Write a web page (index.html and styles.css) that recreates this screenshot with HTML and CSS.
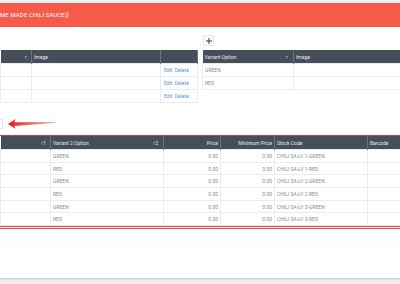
FILE: index.html
```html
<!DOCTYPE html>
<html lang="en">
<head>
    <meta charset="UTF-8">
    <meta name="viewport" content="width=device-width, initial-scale=1.0">
    <link rel="stylesheet" href="styles.css">
</head>
<body>
    <div class="card">
        <div class="card-head">ME MADE CHILI SAUCE)]</div>

        <div class="panels">
            <div class="panel panel-left">
                <div class="toolbar"></div>
                <table class="grid grid-left">
                    <colgroup>
                        <col style="width: 31px">
                        <col style="width: 129px">
                        <col style="width: 37px">
                    </colgroup>
                    <thead>
                        <tr>
                            <th class="sort">&uarr;</th>
                            <th>Image</th>
                            <th></th>
                        </tr>
                    </thead>
                    <tbody>
                        <tr><td></td><td></td><td class="actions"><a>Edit</a> <a>Delete</a></td></tr>
                        <tr><td></td><td></td><td class="actions"><a>Edit</a> <a>Delete</a></td></tr>
                        <tr><td></td><td></td><td class="actions"><a>Edit</a> <a>Delete</a></td></tr>
                    </tbody>
                </table>
            </div>

            <div class="panel panel-right">
                <div class="toolbar">
                    <span class="add-btn">
                        <svg width="6" height="6" viewBox="0 0 6 6"><path d="M3 0V6M0 3H6" stroke="#3d3d3d" stroke-width="1"/></svg>
                    </span>
                </div>
                <table class="grid grid-right">
                    <colgroup>
                        <col style="width: 91px">
                        <col style="width: 120px">
                    </colgroup>
                    <thead>
                        <tr>
                            <th>Variant Option <span class="arrow">&uarr;</span></th>
                            <th>Image</th>
                        </tr>
                    </thead>
                    <tbody>
                        <tr><td>GREEN</td><td></td></tr>
                        <tr><td>RED</td><td></td></tr>
                    </tbody>
                </table>
            </div>
        </div>

        <div class="pointer-row">
            <span class="edge-box"></span>
            <svg class="pointer" width="50" height="14" viewBox="0 0 50 14">
                <defs>
                    <linearGradient id="tail" x1="0" x2="1" y1="0" y2="0">
                        <stop offset="0" stop-color="#e01f1a"/>
                        <stop offset="1" stop-color="#f15a4f" stop-opacity="0.5"/>
                    </linearGradient>
                </defs>
                <polygon points="0,7 7.5,2 6.5,5.2 48,5 48,5.8 6.5,8.9 7.5,12" fill="url(#tail)"/>
            </svg>
        </div>

        <div class="variants">
            <table class="grid grid-variants">
                <colgroup>
                    <col style="width: 50px">
                    <col style="width: 113px">
                    <col style="width: 57px">
                    <col style="width: 54px">
                    <col style="width: 93px">
                    <col style="width: 60px">
                </colgroup>
                <thead>
                    <tr>
                        <th class="sort">&uarr;1</th>
                        <th>Variant 2 Option <span class="arrow">&uarr;2</span></th>
                        <th class="num">Price</th>
                        <th class="num">Minimum Price</th>
                        <th>Stock Code</th>
                        <th>Barcode</th>
                    </tr>
                </thead>
                <tbody>
                    <tr><td></td><td>GREEN</td><td class="num">0.00</td><td class="num">0.00</td><td>CHILI SA-LV 1-GREEN</td><td></td></tr>
                    <tr><td></td><td>RED</td><td class="num">0.00</td><td class="num">0.00</td><td>CHILI SA-LV 1-RED</td><td></td></tr>
                    <tr><td></td><td>GREEN</td><td class="num">0.00</td><td class="num">0.00</td><td>CHILI SA-LV 2-GREEN</td><td></td></tr>
                    <tr><td></td><td>RED</td><td class="num">0.00</td><td class="num">0.00</td><td>CHILI SA-LV 2-RED</td><td></td></tr>
                    <tr><td></td><td>GREEN</td><td class="num">0.00</td><td class="num">0.00</td><td>CHILI SA-LV 3-GREEN</td><td></td></tr>
                    <tr><td></td><td>RED</td><td class="num">0.00</td><td class="num">0.00</td><td>CHILI SA-LV 3-RED</td><td></td></tr>
                </tbody>
            </table>
        </div>

        <div class="card-foot"></div>
    </div>
</body>
</html>
```

FILE: styles.css
```css
html, body {
    margin: 0;
    padding: 0;
    overflow: hidden;
}

body {
    background-color: #eceef0;
    font-family: Roboto, "Liberation Sans", Arial, sans-serif;
    width: 400px;
    height: 284px;
}

.card {
    background-color: #fff;
    margin-top: 3px;
    height: 275px;
    box-shadow: 0 1px 2px rgba(0, 0, 0, 0.18);
    overflow: hidden;
}

.card-head {
    background-color: #f65b4a;
    color: #fff;
    height: 24px;
    line-height: 24px;
    font-size: 6px;
    letter-spacing: 0.1px;
    white-space: nowrap;
}

.panels {
    display: flex;
    gap: 5px;
    padding-top: 8px;
    width: 420px;
}

.panel-left {
    width: 197px;
    flex: none;
}

.panel-right {
    width: 211px;
    flex: none;
}

.toolbar {
    display: flex;
    height: 11px;
    margin-bottom: 4px;
}

.add-btn {
    display: flex;
    align-items: center;
    justify-content: center;
    width: 9px;
    height: 9px;
    margin-left: 1px;
    border: 1px solid #e6e6e6;
    border-radius: 1px;
    background: #fff;
}

table.grid {
    border-collapse: collapse;
    table-layout: fixed;
    font-size: 5px;
}

.grid-left {
    width: 197px;
}

.grid-right {
    width: 211px;
}

.grid th {
    background-color: #464e5b;
    color: #e6e8ec;
    font-weight: normal;
    text-align: left;
    height: 13px;
    padding: 0 2px;
    border-right: 1px solid #6a7280;
    white-space: nowrap;
}

.grid th.sort {
    text-align: right;
    padding-right: 4px;
}

.grid th.num,
.grid td.num {
    text-align: right;
}

.arrow {
    float: right;
    margin-right: 3px;
}

.grid td {
    height: 12px;
    padding: 0 2px;
    color: #8a8d91;
    border: 1px solid #ececec;
    white-space: nowrap;
}

.grid td.actions {
    text-align: left;
    padding-left: 3px;
}

.actions a {
    color: #5a92d6;
    margin-right: 1px;
}

.pointer-row {
    display: flex;
    align-items: center;
    height: 16px;
    margin-top: 13px;
    margin-bottom: 3px;
}

.edge-box {
    width: 2px;
    height: 8px;
    border: 1px solid #e2e2e2;
    border-left: none;
}

.pointer {
    margin-left: 5px;
}

.variants {
    width: 430px;
    border-top: 1px solid #dd3b3b;
    border-bottom: 3px double #e0484a;
}

.grid-variants {
    width: 427px;
}

.grid-variants td {
    height: 11.7px;
}

.card-foot {
    margin-top: 13px;
    border-top: 1px solid #f6f6f6;
}
```
